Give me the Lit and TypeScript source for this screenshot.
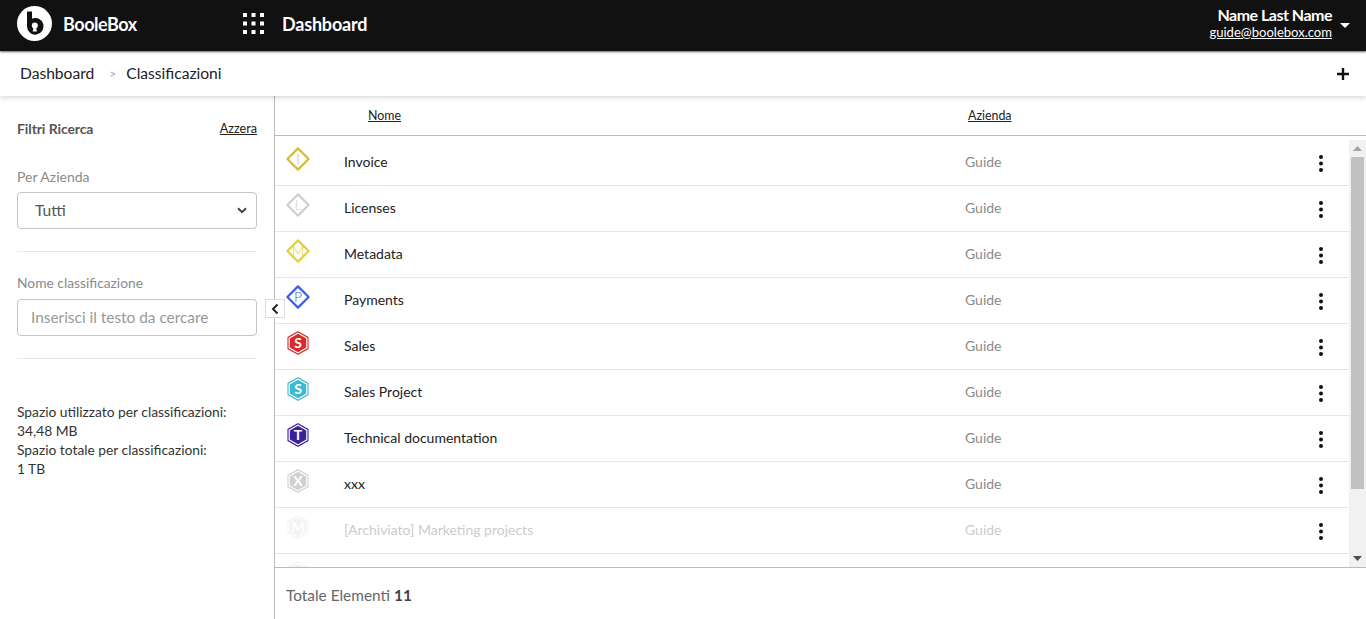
import { LitElement, html, css, svg } from "lit";
import { customElement } from "lit/decorators.js";

type Row = { name: string; company: string; letter: string; shape: "d" | "h"; color: string; faint?: boolean };

const ROWS: Row[] = [
  { name: "Invoice", company: "Guide", letter: "I", shape: "d", color: "#d9bc30" },
  { name: "Licenses", company: "Guide", letter: "L", shape: "d", color: "#cfcfcf" },
  { name: "Metadata", company: "Guide", letter: "M", shape: "d", color: "#e6cf3c" },
  { name: "Payments", company: "Guide", letter: "P", shape: "d", color: "#3d5be8" },
  { name: "Sales", company: "Guide", letter: "S", shape: "h", color: "#d92a2a" },
  { name: "Sales Project", company: "Guide", letter: "S", shape: "h", color: "#3fb9cf" },
  { name: "Technical documentation", company: "Guide", letter: "T", shape: "h", color: "#3c1f9c" },
  { name: "xxx", company: "Guide", letter: "X", shape: "h", color: "#d0d0d0" },
  { name: "[Archiviato] Marketing projects", company: "Guide", letter: "M", shape: "h", color: "#d0d0d0", faint: true },
  { name: "", company: "", letter: "", shape: "h", color: "#d0d0d0", faint: true },
];

const icon = (r: Row) => {
  const outer =
    r.shape === "d"
      ? svg`<path d="M12 1.4 22.6 12 12 22.6 1.4 12Z" fill="none" stroke=${r.color} stroke-width="2.2" stroke-linejoin="round"/>`
      : svg`<path d="M12 .7 22 6.4v11.2L12 23.3 2 17.6V6.4Z" fill="none" stroke=${r.color} stroke-width="1.1"/>
            <path d="M12 2.7 20.2 7.4v9.2L12 21.3 3.8 16.6V7.4Z" fill=${r.color}/>`;
  const tc = r.shape === "d" ? r.color : "#fff";
  const weight = r.shape === "d" ? 300 : 700;
  return html`<svg class="ic" width="24" height="24" viewBox="0 0 24 24">
    ${outer}
    <text x="12" y="17" text-anchor="middle" font-size="14" font-weight=${weight} font-family="Lato" fill=${tc}>${r.letter}</text>
  </svg>`;
};

@customElement("app-root")
export class AppRoot extends LitElement {
  static styles = css`
    :host {
      display: flex;
      flex-direction: column;
      height: 619px;
      overflow: hidden;
      font-family: Lato, sans-serif;
      color: #222;
      background: #fff;
    }
    .top {
      height: 51px;
      flex: none;
      box-sizing: border-box;
      background: #111;
      color: #fff;
      display: flex;
      align-items: center;
      padding: 0 16px 4px 17px;
      box-shadow: 0 1px 2px #666;
      position: relative;
      z-index: 3;
    }
    .logo { flex: none; }
    .brand { font-size: 18px; font-weight: 700; margin-left: 11px; letter-spacing: -0.45px; width: 180px; }
    .grid { flex: none; margin-right: 18px; }
    .title { font-size: 18px; font-weight: 700; letter-spacing: -0.2px; }
    .user { margin-left: auto; text-align: right; }
    .uname { font-size: 16px; line-height: 14px; font-weight: 700; letter-spacing: -0.5px; }
    .mail { font-size: 13.05px; line-height: 16px; margin-top: 2px; text-decoration: underline; color: #fff; display: block; }
    .caret {
      width: 0; height: 0; margin-left: 8px; margin-top: 3px;
      border-left: 5px solid transparent; border-right: 5px solid transparent; border-top: 5px solid #fff;
    }
    .crumbs {
      margin-top: 1px;
      height: 44px;
      flex: none;
      box-sizing: border-box;
      background: #fff;
      display: flex;
      align-items: center;
      padding: 0 16px 2px 20px;
      font-size: 15.6px;
      color: #222;
      box-shadow: 0 1px 6px rgba(0, 0, 0, 0.2);
      position: relative;
      z-index: 2;
    }
    .sep { color: #aaa; font-size: 12px; margin: 0 10px 0 15px; }
    .plus { margin-left: auto; display: block; margin-top: 2px; }
    .main { flex: 1; display: flex; min-height: 0; }
    .side {
      width: 275px;
      flex: none;
      box-sizing: border-box;
      border-right: 1px solid #bbb;
      padding: 24px 17px 0;
      position: relative;
    }
    .shead { display: flex; justify-content: space-between; height: 18px; }
    .shead b { font-size: 14px; line-height: 18px; color: #555; letter-spacing: -0.1px; }
    .shead a { font-size: 12.6px; line-height: 18px; color: #222; text-decoration: underline; }
    .lbl { font-size: 14px; color: #8a8a8a; line-height: 18px; }
    .l1 { margin-top: 30px; }
    .l2 { margin-top: 22px; font-size: 13.8px; }
    .box {
      box-sizing: border-box;
      width: 240px;
      height: 37px;
      margin-top: 6px;
      border: 1px solid #c4c4c4;
      border-radius: 4px;
      display: flex;
      align-items: center;
      background: #fff;
      padding-bottom: 2px;
    }
    .sel { padding-left: 17px; padding-right: 9px; color: #555; justify-content: space-between; font-size: 15.6px; }
    .sel svg { margin-top: 2px; }
    .inp { padding-left: 13px; padding-right: 13px; color: #999; font-size: 15.4px; margin-top: 7px; }
    .hr { border-top: 1px solid #e8e8e8; width: 240px; margin-top: 22px; }
    .usage { margin-top: 43px; font-size: 13.8px; line-height: 19px; color: #333; }
    .toggle {
      position: absolute;
      right: -11px;
      top: 203px;
      width: 20px;
      height: 19px;
      box-sizing: border-box;
      background: #fff;
      border: 1px solid #ddd;
      display: flex;
      align-items: center;
      justify-content: center;
      z-index: 1;
    }
    .content { flex: 1; min-width: 0; display: flex; flex-direction: column; }
    .thead {
      height: 40px;
      flex: none;
      box-sizing: border-box;
      border-bottom: 1px solid #bbb;
      display: flex;
      align-items: center;
      font-size: 12.4px;
      color: #222;
    }
    .thead span span { text-decoration: underline; }
    .th1 { margin-left: 93px; width: 600px; }
    .listwrap { flex: 1; min-height: 0; margin-top: 4px; display: flex; }
    .list { flex: 1; min-width: 0; overflow: hidden; }
    .sb {
      width: 17px;
      flex: none;
      background: #f1f1f1;
      display: flex;
      flex-direction: column;
      align-items: center;
    }
    .sb-btn { height: 17px; flex: none; display: flex; align-items: center; justify-content: center; }
    .sb-thumb { width: 13px; height: 332px; flex: none; background: #c1c1c1; }
    .sb-rest { flex: 1; }
    .row {
      height: 46px;
      box-sizing: border-box;
      border-bottom: 1px solid #e6e6e6;
      display: flex;
      align-items: center;
      font-size: 14px;
      color: #222;
      padding-bottom: 2px;
    }
    .row.arch .nm, .row.arch .co { color: #ccc; }
    .row.arch .ic { opacity: 0.25; }
    .ic { flex: none; margin: -6px 0 0 11px; }
    .nm { margin-left: 34px; width: 621px; flex: none; }
    .co { color: #8a8a8a; font-size: 14px; flex: 1; }
    .dots { flex: none; margin: 4px 26px 0 0; display: block; }
    .foot {
      height: 52px;
      flex: none;
      box-sizing: border-box;
      border-top: 1px solid #bbb;
      display: flex;
      align-items: center;
      padding: 2px 0 0 11px;
      font-size: 15.4px;
      color: #666;
    }
    .foot b { color: #444; margin-left: 4px; }
  `;

  render() {
    const dots = [0, 1, 2].flatMap((y) => [0, 1, 2].map((x) => svg`<rect x=${x * 8.5} y=${y * 8.5} width="4" height="4" fill="#fff"/>`));
    return html`
      <div class="top">
        <svg class="logo" width="35" height="35" viewBox="0 0 35 35">
          <circle cx="17.5" cy="17.5" r="17.5" fill="#fff"/>
          <path d="M10 5.5h5v7.2a8.3 8.3 0 1 1-5 7.8Z" fill="#111"/>
          <circle cx="17.8" cy="19.6" r="3" fill="#fff"/>
          <path d="M16.7 20.5h2.2l1 5h-4.2Z" fill="#fff"/>
        </svg>
        <span class="brand">BooleBox</span>
        <svg class="grid" width="21" height="21" viewBox="0 0 21 21">${dots}</svg>
        <span class="title">Dashboard</span>
        <div class="user">
          <div class="uname">Name Last Name</div>
          <a class="mail">guide@boolebox.com</a>
        </div>
        <span class="caret"></span>
      </div>
      <div class="crumbs">
        <span>Dashboard</span><span class="sep">&gt;</span><span>Classificazioni</span>
        <svg class="plus" width="14" height="14" viewBox="0 0 14 14"><path d="M7 1v12M1 7h12" stroke="#111" stroke-width="2.4"/></svg>
      </div>
      <div class="main">
        <aside class="side">
          <div class="shead"><b>Filtri Ricerca</b><a>Azzera</a></div>
          <div class="lbl l1">Per Azienda</div>
          <div class="box sel">
            <span>Tutti</span>
            <svg width="10" height="7" viewBox="0 0 10 7"><path d="M1 1.2 5 5.2 9 1.2" fill="none" stroke="#444" stroke-width="2"/></svg>
          </div>
          <div class="hr"></div>
          <div class="lbl l2">Nome classificazione</div>
          <div class="box inp">Inserisci il testo da cercare</div>
          <div class="hr"></div>
          <div class="usage">
            Spazio utilizzato per classificazioni:<br />34,48 MB<br />Spazio totale per classificazioni:<br />1 TB
          </div>
          <div class="toggle">
            <svg width="8" height="12" viewBox="0 0 8 12"><path d="M6.5 1.5 2 6l4.5 4.5" fill="none" stroke="#222" stroke-width="2"/></svg>
          </div>
        </aside>
        <section class="content">
          <div class="thead"><span class="th1"><span>Nome</span></span><span><span>Azienda</span></span></div>
          <div class="listwrap">
            <div class="list">
              ${ROWS.map(
                (r) => html`<div class="row ${r.faint ? "arch" : ""}">
                  ${icon(r)}
                  <span class="nm">${r.name}</span>
                  <span class="co">${r.company}</span>
                  <svg class="dots" width="4" height="17" viewBox="0 0 4 17">
                    <circle cx="2" cy="2" r="2" fill="#111"/><circle cx="2" cy="8.5" r="2" fill="#111"/><circle cx="2" cy="15" r="2" fill="#111"/>
                  </svg>
                </div>`
              )}
            </div>
            <div class="sb">
              <div class="sb-btn"><svg width="9" height="5" viewBox="0 0 9 5"><path d="M4.5 0 9 5H0Z" fill="#a3a3a3"/></svg></div>
              <div class="sb-thumb"></div>
              <div class="sb-rest"></div>
              <div class="sb-btn"><svg width="9" height="5" viewBox="0 0 9 5"><path d="M0 0h9L4.5 5Z" fill="#505050"/></svg></div>
            </div>
          </div>
          <div class="foot">Totale Elementi <b>11</b></div>
        </section>
      </div>
    `;
  }
}
